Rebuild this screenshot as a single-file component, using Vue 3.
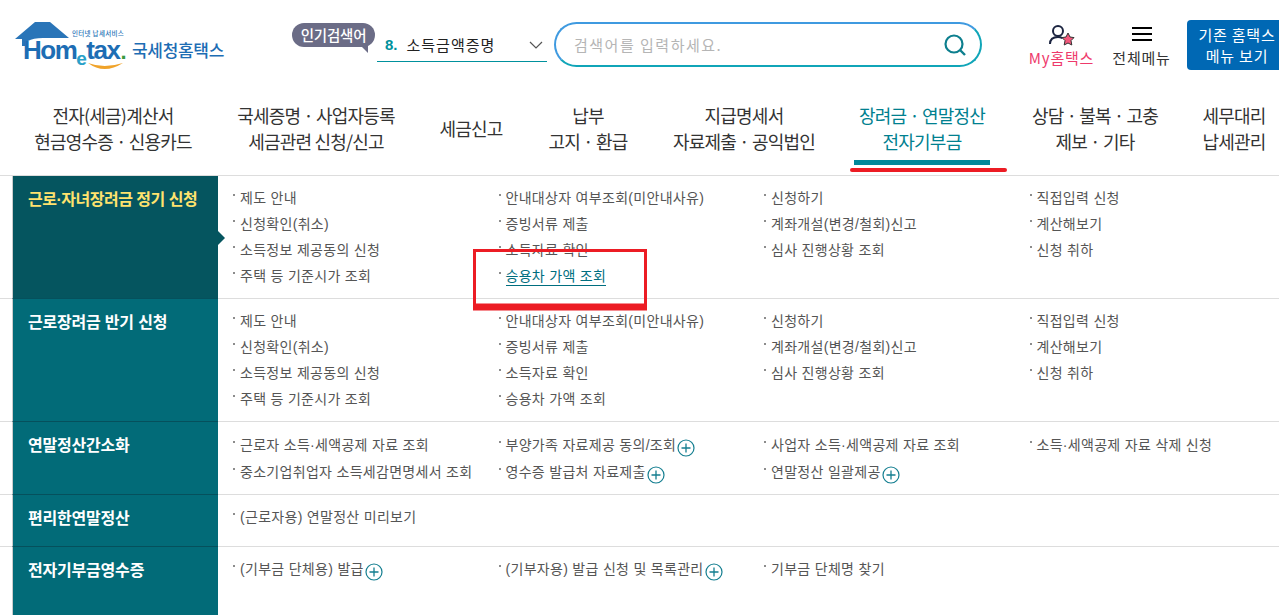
<script setup>
const nav = [
  { w: 203, l: ['전자(세금)계산서', '현금영수증 · 신용카드'] },
  { w: 203, l: ['국세증명 · 사업자등록', '세금관련 신청/신고'] },
  { w: 107, l: ['세금신고'] },
  { w: 127, l: ['납부', '고지 · 환급'] },
  { w: 185, l: ['지급명세서', '자료제출 · 공익법인'] },
  { w: 171, l: ['장려금 · 연말정산', '전자기부금'], active: true },
  { w: 175, l: ['상담 · 불복 · 고충', '제보 · 기타'] },
  { w: 103, l: ['세무대리', '납세관리'] }
]
const t = (text, extra = {}) => ({ text, ...extra })
const base = [
  [t('제도 안내'), t('안내대상자 여부조회(미안내사유)'), t('신청하기'), t('직접입력 신청')],
  [t('신청확인(취소)'), t('증빙서류 제출'), t('계좌개설(변경/철회)신고'), t('계산해보기')],
  [t('소득정보 제공동의 신청'), t('소득자료 확인'), t('심사 진행상황 조회'), t('신청 취하')]
]
const sections = [
  { title: '근로·자녀장려금 정기 신청', active: true, h: 123, rows: [...base, [t('주택 등 기준시가 조회'), t('승용차 가액 조회', { link: true })]] },
  { title: '근로장려금 반기 신청', h: 123, rows: [...base, [t('주택 등 기준시가 조회'), t('승용차 가액 조회')]] },
  { title: '연말정산간소화', h: 73, rows: [
    [t('근로자 소득·세액공제 자료 조회'), t('부양가족 자료제공 동의/조회', { plus: true }), t('사업자 소득·세액공제 자료 조회'), t('소득·세액공제 자료 삭제 신청')],
    [t('중소기업취업자 소득세감면명세서 조회'), t('영수증 발급처 자료제출', { plus: true }), t('연말정산 일괄제공', { plus: true })]
  ] },
  { title: '편리한연말정산', h: 52, rows: [[t('(근로자용) 연말정산 미리보기')]] },
  { title: '전자기부금영수증', h: 68, rows: [[t('(기부금 단체용) 발급', { plus: true }), t('(기부자용) 발급 신청 및 목록관리', { plus: true }), t('기부금 단체명 찾기')]] }
]
</script>

<template>
  <div class="page">
    <header class="top">
      <div class="logo">
        <svg class="roof" width="56" height="24" viewBox="0 0 56 24">
          <path d="M0 17 L20 0 H35 L54 16 H28 Q18 16 13 19 H10 V24 H7 V17 Z" fill="#2a75b8" />
        </svg>
        <span class="logo-small">인터넷 납세서비스</span>
        <span class="logo-word">Hom<i>e</i>tax<b>.</b></span>
        <svg class="smile" width="36" height="10" viewBox="0 0 36 10">
          <path d="M0 1 Q16 13 35 1 Q16 7 0 1 Z" fill="#f0a32a" />
        </svg>
        <span class="logo-name">국세청홈택스</span>
      </div>

      <div class="popular">
        <span class="bubble">인기검색어</span>
        <div class="select">
          <b>8.</b><span>소득금액증명</span>
          <svg width="14" height="8" viewBox="0 0 14 8"><path d="M1 1l6 6 6-6" fill="none" stroke="#555" stroke-width="1.2" /></svg>
        </div>
      </div>

      <div class="search">
        <span>검색어를 입력하세요.</span>
        <svg width="24" height="24" viewBox="0 0 24 24">
          <circle cx="11" cy="11" r="8.500" fill="none" stroke="#0d7f8e" stroke-width="2.2" />
          <path d="M17 17l5 5" stroke="#0d7f8e" stroke-width="2.4" />
        </svg>
      </div>

      <div class="my">
        <svg width="28" height="24" viewBox="0 0 28 24">
          <circle cx="10" cy="7" r="5" fill="none" stroke="#1b2440" stroke-width="2" />
          <path d="M2 20c0-5 3-7 8-7 2 0 3 .4 4.500 1.200" fill="none" stroke="#1b2440" stroke-width="2" />
          <path d="M20 9l2 4 4 .6-3 3 .8 4.400-3.800-2-3.800 2 .8-4.400-3-3 4-.6z" fill="#f4587c" stroke="#333" stroke-width="1" />
        </svg>
        <span>My홈택스</span>
      </div>
      <div class="all">
        <div class="burger"><i></i><i></i><i></i></div>
        <span>전체메뉴</span>
      </div>
      <div class="old">기존 홈택스<br />메뉴 보기</div>
    </header>

    <nav class="nav">
      <div v-for="n in nav" :key="n.l[0]" class="nav-item" :class="{ on: n.active }" :style="{ width: n.w + 'px' }">
        <span v-for="line in n.l" :key="line">{{ line }}</span>
        <i v-if="n.active" class="bar"></i>
        <i v-if="n.active" class="redline"></i>
      </div>
    </nav>

    <main class="table">
      <section v-for="s in sections" :key="s.title" class="row" :style="{ height: s.h + 'px' }">
        <h3 class="side" :class="{ active: s.active }">{{ s.title }}</h3>
        <div class="cells">
          <div v-for="(r, i) in s.rows" :key="i" class="line">
            <div v-for="c in r" :key="c.text" class="cell">
              <a :class="{ link: c.link }">{{ c.text }}</a>
              <svg v-if="c.plus" class="plus" width="18" height="18" viewBox="0 0 18 18">
                <circle cx="9" cy="9" r="8" fill="none" stroke="#137e90" stroke-width="1.200" />
                <path d="M9 4.500v9M4.500 9h9" stroke="#137e90" stroke-width="1.300" />
              </svg>
            </div>
          </div>
        </div>
      </section>
      <svg class="mark" width="174" height="62" viewBox="0 0 174 62">
        <path d="M1.500 1.500 H172.500 V58 H1.500 Z" fill="none" stroke="#ec1c24" stroke-width="3" />
        <path d="M0 58 H174" stroke="#ec1c24" stroke-width="7" />
      </svg>
    </main>
  </div>
</template>

<style scoped>
.page {
  width: 1279px;
  height: 615px;
  overflow: hidden;
  background: #fff;
  font-family: "Noto Sans CJK KR", "Noto Sans", sans-serif;
  color: #333;
}
.top {
  height: 90px;
  display: flex;
  align-items: flex-start;
  position: relative;
}
.logo {
  width: 292px;
  height: 90px;
  position: relative;
  flex: none;
}
.roof { position: absolute; left: 15px; top: 22px; }
.logo-small {
  position: absolute; left: 72px; top: 30px;
  font-size: 6.500px; line-height: 7px; color: #2a75b8; font-weight: 500; letter-spacing: 0.3px;
}
.logo-word {
  position: absolute; left: 23px; top: 38px;
  font: 700 26px/24px "Liberation Sans", sans-serif;
  letter-spacing: -1.500px;
  color: #1d6db4;
  white-space: nowrap;
}
.logo-word i {
  font-style: normal; font-size: 19px; color: #2aa0c8;
  position: relative; top: 6px; letter-spacing: -0.5px;
}
.logo-word b { color: #3a9a3c; font-size: 22px; margin-left: 1px; }
.smile { position: absolute; left: 88px; top: 62px; }
.logo-name {
  position: absolute; left: 132px; top: 39px;
  font-size: 17px; line-height: 22px; font-weight: 500; letter-spacing: -0.3px; color: #1d6db4;
}
.popular { width: 262px; flex: none; position: relative; height: 90px; }
.bubble {
  position: absolute; left: 0; top: 23px;
  width: 83px; height: 24px; border-radius: 12px;
  background: #6b6c86; color: #fff;
  font-size: 14.500px; line-height: 23px; font-weight: 500; text-align: center; letter-spacing: -0.2px;
}
.bubble::after {
  content: ""; position: absolute; right: 7px; bottom: -6px;
  border-left: 7px solid transparent; border-top: 7px solid #6b6c86;
}
.select {
  position: absolute; left: 85px; top: 28px;
  width: 170px; height: 34px; box-sizing: border-box;
  border-bottom: 1px solid #00919d;
  display: flex; align-items: center; padding-left: 8px;
  font-size: 15px;
}
.select b { color: #00919d; margin-right: 9px; font-size: 15px; font-family: "Liberation Sans", sans-serif; }
.select span { color: #222; flex: 1; letter-spacing: 1px; }
.select svg { margin-right: 4px; }
.search {
  position: absolute; left: 554px; top: 22px;
  width: 428px; height: 45px; box-sizing: border-box;
  border-radius: 23px; border: 2px solid;
  border-color: #3f9ae0 #10a5b8 #10a5b8 #3f9ae0;
  display: flex; align-items: center; justify-content: space-between;
  padding: 0 13px 0 18px;
  font-size: 15px; color: #b5b5b5; letter-spacing: 1.500px;
}
.my, .all {
  position: absolute; top: 24px;
  display: flex; flex-direction: column; align-items: center;
  font-size: 15px; line-height: 20px; white-space: nowrap;
}
.my { left: 1028px; width: 67px; color: #ee3a6b; letter-spacing: 0.8px; }
.all { left: 1112px; width: 59px; color: #333; letter-spacing: 0.8px; }
.my svg { height: 24px; }
.burger { height: 24px; padding-top: 3px; box-sizing: border-box; }
.burger i { display: block; width: 20px; height: 2px; background: #000; margin-bottom: 4px; }
.old {
  position: absolute; left: 1187px; top: 20px;
  width: 100px; height: 50px; border-radius: 4px;
  background: #0068b4; color: #fff;
  font-size: 15px; line-height: 21px; padding-top: 4px; box-sizing: border-box;
  text-align: center; letter-spacing: 0.8px;
}
.nav {
  height: 86px; display: flex; margin-left: 11.500px;
  width: 1290px; box-sizing: border-box;
}
.nav-item {
  flex: none; position: relative;
  display: flex; flex-direction: column; justify-content: center; align-items: center;
  height: 76px;
  padding-bottom: 1px; box-sizing: border-box;
  font-size: 18px; line-height: 26px; letter-spacing: -0.8px; color: #333; white-space: nowrap;
}
.nav-item.on { color: #00808f; }
.bar {
  position: absolute; left: 17.500px; top: 70px;
  width: 136px; height: 5px; background: #00889a;
}
.redline {
  position: absolute; left: 13.500px; top: 78px;
  width: 157px; height: 4px; background: #ec1c24; border-radius: 2px;
}
.table {
  position: relative;
  border-top: 1px solid #ddd;
  margin-top: -1px;
}
.row {
  display: flex;
  border-bottom: 1px solid #ddd;
  box-sizing: border-box;
}
.row:last-of-type { border-bottom: 0; }
.side {
  flex: none; width: 206px; margin: 0 0 -1px 12px; box-sizing: border-box;
  border-left: 1px solid #ccc;
  background: #026b78;
  border-bottom: 1px solid #05505c;
  color: #fff;
  font-family: "Liberation Sans", "Noto Sans CJK KR", sans-serif;
  font-size: 16px; line-height: 24px; font-weight: 700; letter-spacing: -0.2px;
  padding: 12px 0 0 15px;
  position: relative;
}
.side.active { background: #05555f; color: #ffe36e; letter-spacing: -0.5px; }
.side.active::after {
  content: ""; position: absolute; right: -7px; top: 55px;
  border-left: 7px solid #05555f;
  border-top: 7px solid transparent; border-bottom: 7px solid transparent;
}
.cells { flex: 1; padding: 9px 0 0 15px; }
.line { display: flex; height: 26px; }
.row:nth-of-type(3) .line { height: 27px; }
.cell {
  width: 265.500px; flex: none; display: flex; align-items: center;
  font-family: "Liberation Sans", "Noto Sans CJK KR", sans-serif;
  font-size: 14px; color: #555; white-space: nowrap; line-height: 26px;
}
.cell::before {
  content: ""; width: 2px; height: 2px; background: #666; border-radius: 1px;
  margin-right: 5px; margin-top: -6px; flex: none;
}
.cell a { letter-spacing: 0.3px; }
.cell a.link { color: #006e7f; border-bottom: 1px solid #006e7f; line-height: 18px; }
.plus { margin-left: 1px; margin-top: 6px; flex: none; }
.mark { position: absolute; left: 473px; top: 73px; pointer-events: none; }
</style>

<style>
html, body { margin: 0; background: #fff; overflow: hidden; }
</style>
